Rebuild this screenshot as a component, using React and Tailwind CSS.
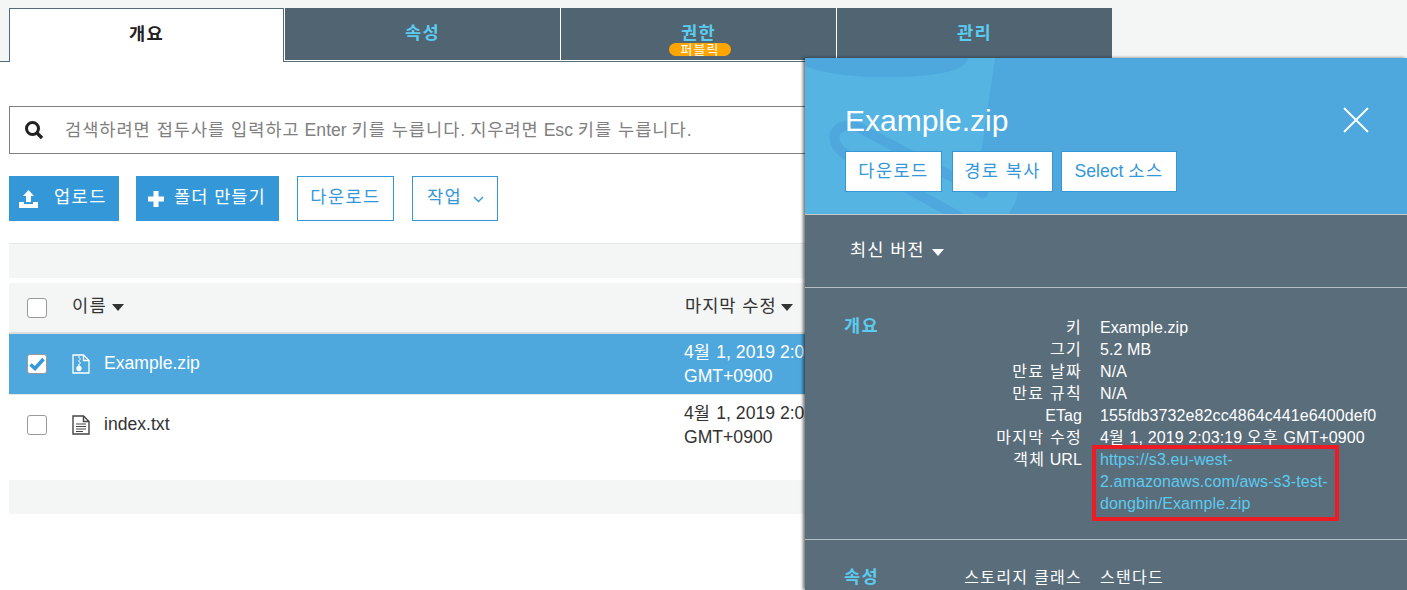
const sans = "font-['Liberation_Sans','Noto_Sans_CJK_KR',sans-serif]";

const details = [
    { label: "키", value: "Example.zip" },
    { label: "그기", value: "5.2 MB" },
    { label: "만료 날짜", value: "N/A" },
    { label: "만료 규칙", value: "N/A" },
    { label: "ETag", value: "155fdb3732e82cc4864c441e6400def0" },
    { label: "마지막 수정", value: "4월 1, 2019 2:03:19 오후 GMT+0900" },
];

// hangul in the screenshot runs a full em wide, the installed font is narrower
function Ko({ text, tight }) {
    return text.split(/([가-힣]+(?: [가-힣]+)*)/).map((part, index) =>
        index % 2 === 1 ? (
            <span key={index} className={tight ? "tracking-[0.055em]" : "tracking-[0.08em]"}>{part}</span>
        ) : (
            part
        )
    );
}

function Caret({ className }) {
    return (
        <svg width="12" height="7" viewBox="0 0 12 7" className={className}>
            <path d="M0 0h12L6 7z" fill="currentColor" />
        </svg>
    );
}

function Checkbox({ checked }) {
    return (
        <div className="w-5 h-5 bg-white border border-[#999] rounded-[3px] flex items-center justify-center">
            {checked && (
                <svg width="16" height="14" viewBox="0 0 16 14">
                    <path d="M1.5 7.5l4.5 4L14.5 2" fill="none" stroke="#3498d8" strokeWidth="3.6" />
                </svg>
            )}
        </div>
    );
}

function ZipIcon() {
    return (
        <svg width="18" height="20" viewBox="0 0 18 20" fill="none" stroke="#fff" strokeWidth="1.3">
            <path d="M1 1h10.5L17 6.5V19H1z" />
            <path d="M11.5 1v5.5H17" />
            <path d="M6 3h2M7 5h2M6 7h2M7 9h2" strokeWidth="1" />
            <circle cx="7" cy="14.5" r="2" fill="#fff" />
            <path d="M7 10v3" />
        </svg>
    );
}

function TextIcon() {
    return (
        <svg width="18" height="20" viewBox="0 0 18 20" fill="none" stroke="#444" strokeWidth="1.4">
            <path d="M1 1h10.5L17 6.5V19H1z" />
            <path d="M11.5 1v5.5H17" />
            <path d="M4 9h10M4 11.5h10M4 14h10M4 16.5h7" strokeWidth="1.2" />
        </svg>
    );
}

function FileRow({ name, selected }) {
    return (
        <div className={`h-[60px] flex items-center ${selected ? "bg-[#4ea8dd] text-white" : "bg-white text-[#333]"}`}>
            <div className="w-[63px] pl-[18px]">
                <Checkbox checked={selected} />
            </div>
            <div className="w-[32px] pb-px">{selected ? <ZipIcon /> : <TextIcon />}</div>
            <div className="w-[580px] pb-[2px] text-[17.6px]">{name}</div>
            <div className="text-[17.6px] leading-[24px] whitespace-nowrap">
                <div><Ko text="4월 1, 2019 2:03:19 오후" /></div>
                <div>GMT+0900</div>
            </div>
        </div>
    );
}

function Tab({ label, children }) {
    return (
        <div className="relative w-[276px] h-[53px] bg-[#506471] border-l border-white border-b flex justify-center pt-[12px]">
            <span className="text-[#5ccbf0] text-[17.6px] font-bold leading-6 mt-px"><Ko text={label} /></span>
            {children}
        </div>
    );
}

function DetailPanel() {
    return (
        <div className="absolute left-[805px] top-[58px] right-0 bottom-0 bg-[#5a6d7b] shadow-[-2px_0_3px_rgba(0,0,0,0.55)]">
            <div className="relative h-[157px] bg-[#4ea8dd] border-b border-[#c9c9c9] pl-[40px] overflow-hidden">
                <svg className="absolute left-0 top-0" width="300" height="156" viewBox="0 0 300 156">
                    <path d="M0 0H190L176 95L213 133Q212 145 203 156H0z" fill="#56b4e3" />
                    <path d="M0 8Q30 20 90 19Q160 18 163 0H0z" fill="#4ea8dd" />
                    <path d="M160 162L40 96C25 85 27 70 40 68C48 66 52 68 60 73L178 135" fill="none" stroke="#4ea8dd" strokeWidth="10" strokeLinecap="round" />
                </svg>
                <div className="relative pt-[43px] text-white text-[30px] leading-[40px]">Example.zip</div>
                <div className="relative flex mt-[10px] text-[#3498d8] text-[17.6px]">
                    <button className="h-[41px] w-[97px] bg-white border border-[#3498d8]"><Ko text="다운로드" /></button>
                    <button className="ml-[10px] h-[41px] w-[101px] bg-white border border-[#3498d8]"><Ko text="경로 복사" /></button>
                    <button className="ml-[8px] h-[41px] w-[116px] bg-white border border-[#3498d8]"><Ko text="Select 소스" /></button>
                </div>
                <svg className="absolute left-[538px] top-[49px]" width="26" height="26" viewBox="0 0 26 26">
                    <path d="M1 1l24 24M25 1L1 25" stroke="#fff" strokeWidth="1.8" />
                </svg>
            </div>

            <div className="h-[73px] border-b border-[#b5bec4] pl-[45px] pb-[2px] flex items-center gap-[8px] text-white text-[17.6px]">
                <span><Ko text="최신 버전" tight /></span>
                <Caret className="mt-[5px]" />
            </div>

            <div className="h-[252px] border-b border-[#b5bec4] pl-[39px] pt-[29px] flex text-white text-[16px] leading-[22px] tracking-[0.1px]">
                <div className="w-[97px] -mt-[2px] text-[#5ccbf0] text-[17.6px] font-bold"><Ko text="개요" /></div>
                <div>
                    {details.map((row) => (
                        <div key={row.label} className="flex">
                            <div className="w-[141px] text-right"><Ko text={row.label} /></div>
                            <div className="ml-[18px] whitespace-nowrap"><Ko text={row.value} /></div>
                        </div>
                    ))}
                    <div className="flex">
                        <div className="w-[141px] text-right"><Ko text="객체 URL" /></div>
                        <div className="relative ml-[18px] w-[240px] text-[#5ccbf0]">
                            https://s3.eu-west-
                            <br />
                            2.amazonaws.com/aws-s3-test-
                            <br />
                            dongbin/Example.zip
                            <div className="absolute -left-[8px] -top-[4px] w-[247px] h-[76px] border-[4px] border-[#ed1c24]" />
                        </div>
                    </div>
                </div>
            </div>

            <div className="pl-[39px] pt-[27px] flex text-white text-[16px] leading-[22px]">
                <div className="w-[97px] -mt-[1px] text-[#5ccbf0] text-[17.6px] font-bold"><Ko text="속성" /></div>
                <div className="w-[141px] text-right whitespace-nowrap"><Ko text="스토리지 클래스" /></div>
                <div className="ml-[18px]"><Ko text="스탠다드" /></div>
            </div>
        </div>
    );
}

export default function App() {
    return (
        <div className={`relative h-[590px] w-[1407px] overflow-hidden bg-white ${sans}`}>
            <div className="h-[62px] bg-[#f4f6f6] pt-[8px] flex items-start">
                <div className="w-[9px] h-[54px] border-b border-[#546b78]" />
                <div className="w-[275px] h-[54px] bg-white border border-b-0 border-[#546b78] flex justify-center pt-[12px]">
                    <span className="text-[#222] text-[17.6px] font-bold leading-6 mt-px"><Ko text="개요" /></span>
                </div>
                <div className="flex border-b border-[#546b78] h-[54px]">
                    <Tab label="속성" />
                    <Tab label="권한">
                        <span className="absolute left-[108px] top-[35px] w-[62px] h-[13px] rounded-full bg-[#ffa500] text-white text-[13px] leading-[13px] text-center"><Ko text="퍼블릭" /></span>
                    </Tab>
                    <Tab label="관리" />
                </div>
            </div>

            <div className="pl-[9px]">
                <div className="mt-[44px] h-[48px] w-[1000px] border border-[#808080] flex items-center">
                    <svg className="ml-[14px]" width="20" height="20" viewBox="0 0 20 20" fill="none" stroke="#222">
                        <circle cx="8.5" cy="8.5" r="6" strokeWidth="3" />
                        <path d="M13 13l5 5" strokeWidth="3.4" />
                    </svg>
                    <span className="ml-[21px] text-[#808080] text-[17.6px]">
                        <Ko text="검색하려면 접두사를 입력하고 Enter 키를 누릅니다. 지우려면 Esc 키를 누릅니다." tight />
                    </span>
                </div>

                <div className="mt-[22px] flex text-[17.6px]">
                    <button className="w-[110px] h-[45px] pb-[2px] bg-[#3498d8] text-white flex items-center pl-[10px] gap-[16px]">
                        <svg width="19" height="18" viewBox="0 0 19 18" fill="#fff" className="mt-[2px]">
                            <path d="M9.5 0L15 6h-3v6H7V6H4z" />
                            <path d="M0 12h5v2h9v-2h5v6H0z" />
                        </svg>
                        <Ko text="업로드" />
                    </button>
                    <button className="ml-[17px] w-[143px] h-[45px] pb-[2px] bg-[#3498d8] text-white flex items-center pl-[12px] gap-[10px]">
                        <svg width="16" height="16" viewBox="0 0 16 16" fill="#fff" className="mt-[2px]">
                            <path d="M5.5 0h5v5.500h5.500v5h-5.500v5.500h-5v-5.500h-5.500v-5h5.500z" />
                        </svg>
                        <span><Ko text="폴더 만들기" tight /></span>
                    </button>
                    <button className="ml-[18px] w-[97px] h-[45px] pb-[2px] border border-[#3498d8] text-[#3498d8]"><Ko text="다운로드" /></button>
                    <button className="ml-[18px] w-[86px] h-[45px] pb-[2px] border border-[#3498d8] text-[#3498d8] flex items-center pl-[14px] gap-[11px]">
                        <span><Ko text="작업" /></span>
                        <svg width="11" height="7" viewBox="0 0 11 7" fill="none" stroke="#3498d8" strokeWidth="1.4" className="mt-[4px]">
                            <path d="M1 1l4.500 4.500L10 1" />
                        </svg>
                    </button>
                </div>

                <div className="mt-[22px] h-[35px] bg-[#f4f6f6] border-t border-[#e5e7e7]" />

                <div className="mt-[5px] h-[51px] bg-[#f4f6f6] border-b-2 border-[#dddddd] flex items-center text-[#333] text-[17.6px]">
                    <div className="w-[63px] pl-[18px]">
                        <Checkbox />
                    </div>
                    <div className="w-[613px] pb-[3px] flex items-center gap-[5px]">
                        <span><Ko text="이름" /></span>
                        <Caret className="mt-[3px]" />
                    </div>
                    <div className="pb-[3px] flex items-center gap-[4px] whitespace-nowrap">
                        <span><Ko text="마지막 수정" tight /></span>
                        <Caret className="mt-[3px]" />
                    </div>
                </div>

                <div className="border-b border-[#e5e7e7]">
                    <FileRow name="Example.zip" selected />
                </div>
                <FileRow name="index.txt" />

                <div className="mt-[25px] h-[34px] bg-[#f4f6f6]" />
            </div>

            <DetailPanel />
        </div>
    );
}
